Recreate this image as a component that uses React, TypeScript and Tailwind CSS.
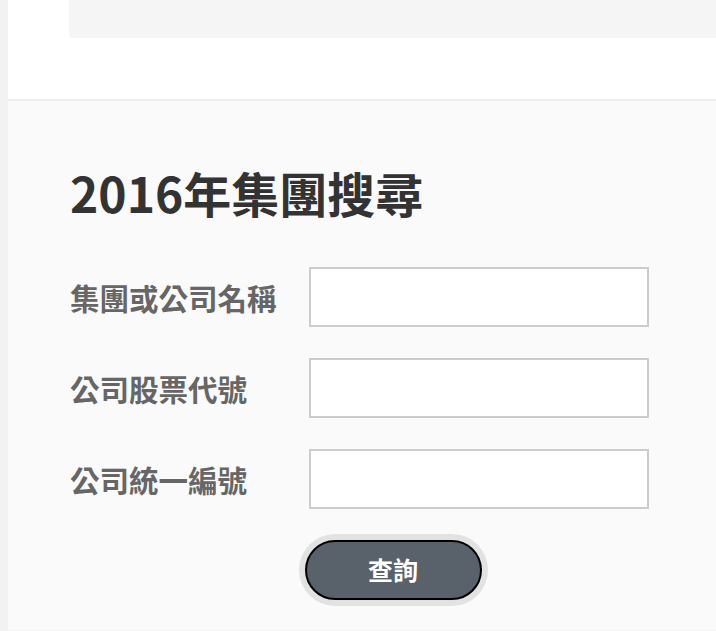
import React from 'react';

const fields = ['集團或公司名稱', '公司股票代號', '公司統一編號'];

const App: React.FC = () => {
  return (
    <div
      className="flex min-h-screen bg-[#f2f2f2]"
      style={{ fontFamily: '"Noto Sans CJK TC", "Noto Sans", sans-serif' }}
    >
      {/* left edge strip */}
      <div className="w-2 shrink-0" />

      <div className="min-w-0 flex-1">
        {/* top area */}
        <div className="h-[99px] bg-white pl-[61px]">
          <div className="h-[38px] rounded-bl bg-[#f5f5f5]" />
        </div>

        {/* search section */}
        <div className="min-h-[531px] border-t-2 border-[#ececec] bg-[#fafafa] pl-[62px] pt-[55px]">
          <h1 className="text-[48px] font-semibold leading-[72px] text-[#333333]">2016年集團搜尋</h1>

          <form className="mt-[39px] flex flex-col gap-[31px]" onSubmit={e => e.preventDefault()}>
            {fields.map(label => (
              <div key={label} className="flex items-center">
                <label className="w-[239px] shrink-0 text-[29.5px] font-semibold text-[#666666]">{label}</label>
                <input
                  type="text"
                  className="h-[60px] w-[340px] border-2 border-[#cccccc] bg-white px-3 text-xl outline-none"
                />
              </div>
            ))}

            <div className="flex justify-center">
              <button
                type="submit"
                className="h-[60px] w-[177px] rounded-full border-2 border-black bg-[#59616a] text-[25px] font-bold text-white ring-[6px] ring-[#e2e2e2]"
              >
                查詢
              </button>
            </div>
          </form>
        </div>
      </div>
    </div>
  );
};

export default App;
